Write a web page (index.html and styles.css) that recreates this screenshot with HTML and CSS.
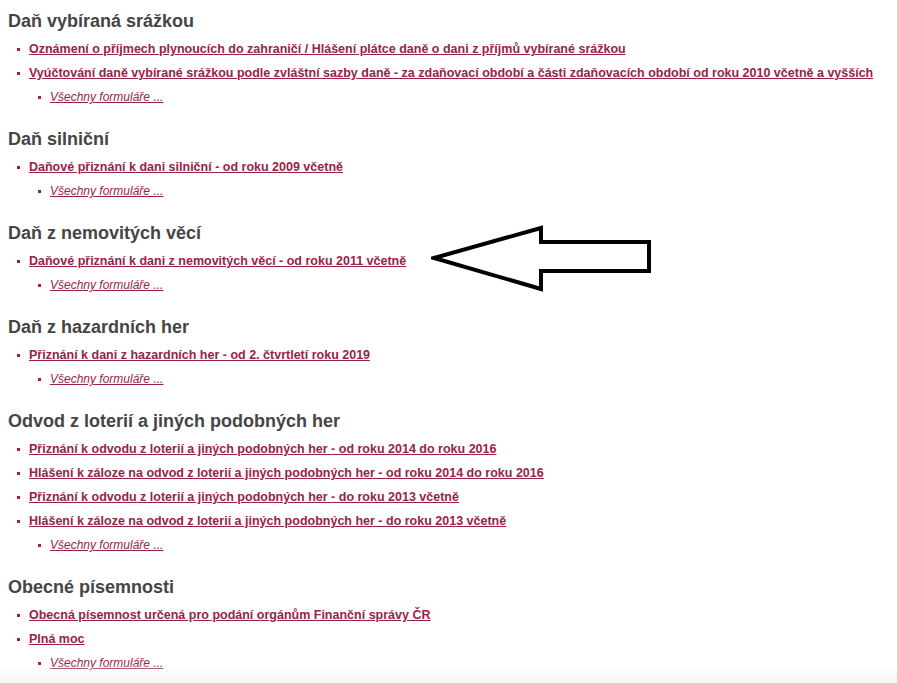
FILE: index.html
```html
<!DOCTYPE html>
<html lang="cs">
<head>
<meta charset="utf-8">
<title>Formuláře</title>
<link rel="stylesheet" href="styles.css">
</head>
<body>
<main class="page">
  <section class="sec">
    <h2 class="sec-title">Daň vybíraná srážkou</h2>
    <ul class="links">
      <li><a href="#">Oznámení o příjmech plynoucích do zahraničí / Hlášení plátce daně o dani z příjmů vybírané srážkou</a></li>
      <li><a href="#">Vyúčtování daně vybírané srážkou podle zvláštní sazby daně - za zdaňovací období a části zdaňovacích období od roku 2010 včetně a vyšších</a></li>
    </ul>
    <ul class="more"><li><a href="#">Všechny formuláře ...</a></li></ul>
  </section>
  <section class="sec">
    <h2 class="sec-title">Daň silniční</h2>
    <ul class="links">
      <li><a href="#">Daňové přiznání k dani silniční - od roku 2009 včetně</a></li>
    </ul>
    <ul class="more"><li><a href="#">Všechny formuláře ...</a></li></ul>
  </section>
  <section class="sec">
    <h2 class="sec-title">Daň z nemovitých věcí</h2>
    <ul class="links">
      <li><a href="#">Daňové přiznání k dani z nemovitých věcí - od roku 2011 včetně</a></li>
    </ul>
    <ul class="more"><li><a href="#">Všechny formuláře ...</a></li></ul>
  </section>
  <section class="sec">
    <h2 class="sec-title">Daň z hazardních her</h2>
    <ul class="links">
      <li><a href="#">Přiznání k dani z hazardních her - od 2. čtvrtletí roku 2019</a></li>
    </ul>
    <ul class="more"><li><a href="#">Všechny formuláře ...</a></li></ul>
  </section>
  <section class="sec">
    <h2 class="sec-title">Odvod z loterií a jiných podobných her</h2>
    <ul class="links">
      <li><a href="#">Přiznání k odvodu z loterií a jiných podobných her - od roku 2014 do roku 2016</a></li>
      <li><a href="#">Hlášení k záloze na odvod z loterií a jiných podobných her - od roku 2014 do roku 2016</a></li>
      <li><a href="#">Přiznání k odvodu z loterií a jiných podobných her - do roku 2013 včetně</a></li>
      <li><a href="#">Hlášení k záloze na odvod z loterií a jiných podobných her - do roku 2013 včetně</a></li>
    </ul>
    <ul class="more"><li><a href="#">Všechny formuláře ...</a></li></ul>
  </section>
  <section class="sec">
    <h2 class="sec-title">Obecné písemnosti</h2>
    <ul class="links">
      <li><a href="#">Obecná písemnost určená pro podání orgánům Finanční správy ČR</a></li>
      <li><a href="#">Plná moc</a></li>
    </ul>
    <ul class="more"><li><a href="#">Všechny formuláře ...</a></li></ul>
  </section>
</main>
<svg class="arrow" width="230" height="70" viewBox="0 0 230 70" aria-hidden="true">
  <polygon points="3,33 110,3 110,17 218,17 218,46 110,46 110,64" fill="none" stroke="#000" stroke-width="4" stroke-linejoin="miter"/>
</svg>
<div class="fade"></div>
</body>
</html>
```
FILE: styles.css
```css
html, body {
  margin: 0;
  padding: 0;
  background: #fff;
}
body {
  font-family: "Liberation Sans", Arial, sans-serif;
  position: relative;
  min-height: 683px;
  overflow: hidden;
}
.page {
  padding: 10.5px 8px 0 8px;
}
.sec + .sec {
  margin-top: 19.5px;
}
.sec-title {
  margin: 0 0 5.5px 0;
  font-size: 18px;
  line-height: 21px;
  font-weight: bold;
  color: #454545;
}
.links, .more {
  list-style: none;
  margin: 0;
  padding: 0 0 0 9px;
}
.more {
  padding-left: 30px;
  margin-top: 0;
}
.links li, .more li {
  line-height: 24px;
  font-size: 12px;
  white-space: nowrap;
}
.links li::before, .more li::before {
  content: "";
  display: inline-block;
  width: 3px;
  height: 3px;
  background: #9b2247;
  margin-right: 9px;
  vertical-align: middle;
}
.links a {
  color: #9b2247;
  font-size: 12.5px;
  font-weight: bold;
  text-decoration: underline;
}
.more a {
  color: #9b2247;
  font-style: italic;
  text-decoration: underline;
}
.arrow {
  position: absolute;
  left: 431px;
  top: 225px;
}
.fade {
  position: absolute;
  left: 0;
  right: 0;
  top: 663px;
  height: 20px;
  background: linear-gradient(to bottom, rgba(245,245,245,0), #f5f5f5);
  pointer-events: none;
}
```
